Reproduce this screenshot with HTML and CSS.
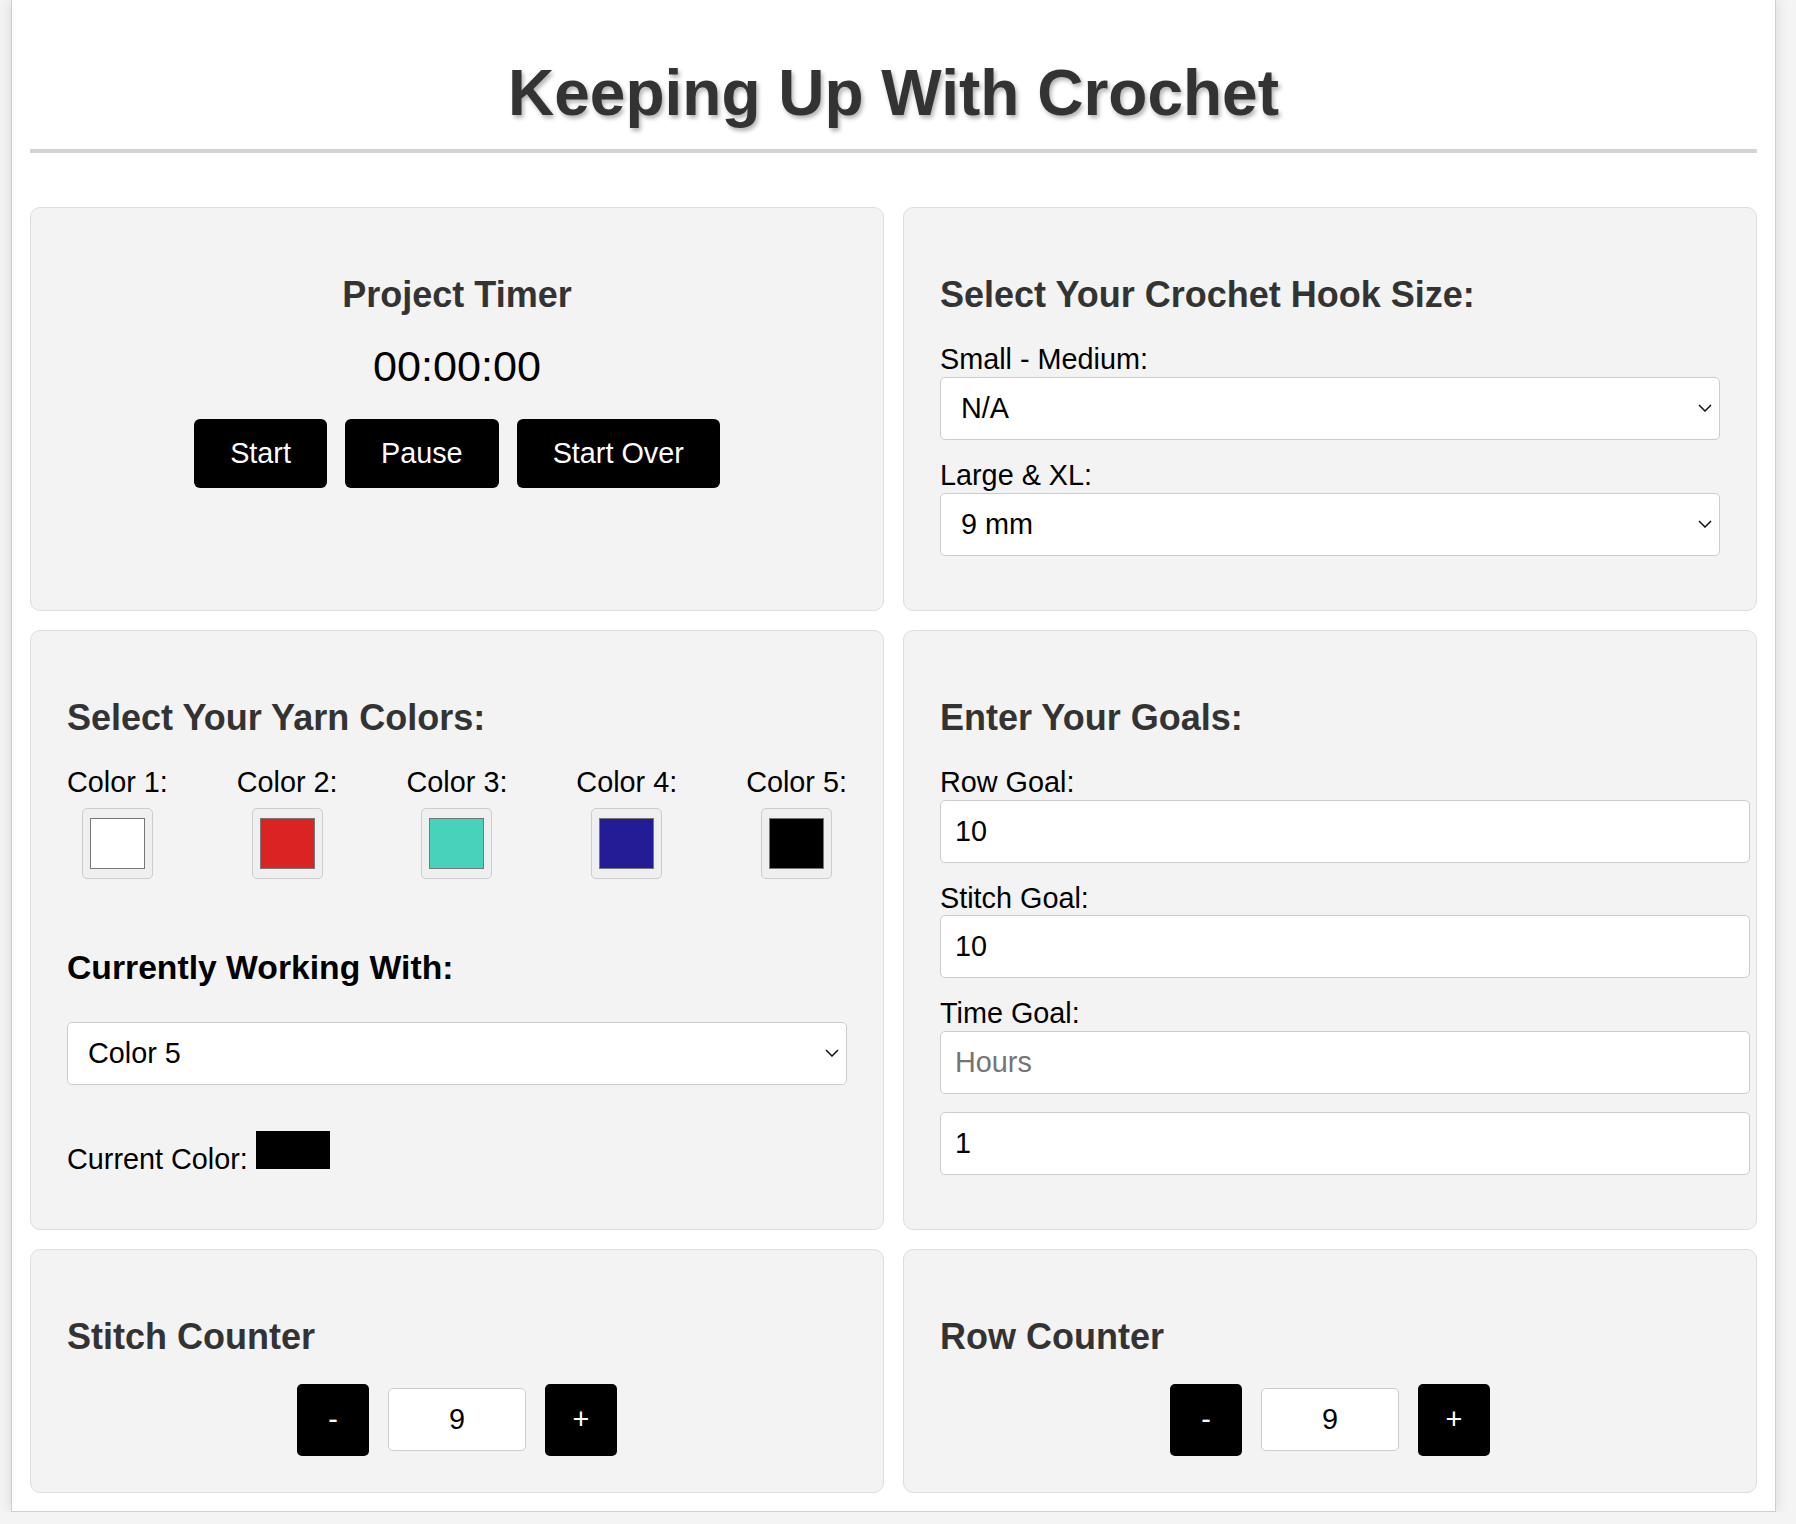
FILE: index.html
```html
<!DOCTYPE html>
<html lang="en">
<head>
<meta charset="utf-8">
<title>Keeping Up With Crochet</title>
<link rel="stylesheet" href="styles.css">
</head>
<body>
<div class="app">
  <h1 class="app-title">Keeping Up With Crochet</h1>
  <div class="grid">
    <section class="card card-center">
      <h2 class="card-title">Project Timer</h2>
      <div class="timer">00:00:00</div>
      <div class="timer-buttons">
        <button class="btn" type="button">Start</button>
        <button class="btn" type="button">Pause</button>
        <button class="btn" type="button">Start Over</button>
      </div>
    </section>

    <section class="card">
      <h2 class="card-title">Select Your Crochet Hook Size:</h2>
      <label class="field-label" for="hook-sm">Small - Medium:</label>
      <div class="select-wrap">
        <select class="field-select" id="hook-sm"><option>N/A</option></select>
        <svg class="select-arrow" width="14" height="8" viewBox="0 0 14 8" aria-hidden="true"><polyline points="1,1 7,7 13,1" fill="none" stroke="#111" stroke-width="1.5"/></svg>
      </div>
      <label class="field-label" for="hook-lg">Large &amp; XL:</label>
      <div class="select-wrap">
        <select class="field-select" id="hook-lg"><option>9 mm</option></select>
        <svg class="select-arrow" width="14" height="8" viewBox="0 0 14 8" aria-hidden="true"><polyline points="1,1 7,7 13,1" fill="none" stroke="#111" stroke-width="1.5"/></svg>
      </div>
    </section>

    <section class="card">
      <h2 class="card-title">Select Your Yarn Colors:</h2>
      <div class="swatches">
        <div class="swatch-item"><label class="field-label" for="c1">Color 1:</label><input class="swatch" id="c1" type="color" value="#ffffff"></div>
        <div class="swatch-item"><label class="field-label" for="c2">Color 2:</label><input class="swatch" id="c2" type="color" value="#dc2323"></div>
        <div class="swatch-item"><label class="field-label" for="c3">Color 3:</label><input class="swatch" id="c3" type="color" value="#48d1bb"></div>
        <div class="swatch-item"><label class="field-label" for="c4">Color 4:</label><input class="swatch" id="c4" type="color" value="#241c96"></div>
        <div class="swatch-item"><label class="field-label" for="c5">Color 5:</label><input class="swatch" id="c5" type="color" value="#000000"></div>
      </div>
      <h3 class="working-title">Currently Working With:</h3>
      <div class="select-wrap">
        <select class="field-select"><option>Color 5</option></select>
        <svg class="select-arrow" width="14" height="8" viewBox="0 0 14 8" aria-hidden="true"><polyline points="1,1 7,7 13,1" fill="none" stroke="#111" stroke-width="1.5"/></svg>
      </div>
      <p class="current-color">Current Color: <span class="current-chip"></span></p>
    </section>

    <section class="card">
      <h2 class="card-title">Enter Your Goals:</h2>
      <label class="field-label" for="row-goal">Row Goal:</label>
      <input class="field-input" id="row-goal" type="number" value="10">
      <label class="field-label" for="stitch-goal">Stitch Goal:</label>
      <input class="field-input" id="stitch-goal" type="number" value="10">
      <label class="field-label" for="time-goal">Time Goal:</label>
      <input class="field-input" id="time-goal" type="number" placeholder="Hours">
      <input class="field-input" type="number" value="1">
    </section>

    <section class="card">
      <h2 class="card-title">Stitch Counter</h2>
      <div class="counter">
        <button class="counter-btn" type="button">-</button>
        <input class="counter-value" type="number" value="9">
        <button class="counter-btn" type="button">+</button>
      </div>
    </section>

    <section class="card">
      <h2 class="card-title">Row Counter</h2>
      <div class="counter">
        <button class="counter-btn" type="button">-</button>
        <input class="counter-value" type="number" value="9">
        <button class="counter-btn" type="button">+</button>
      </div>
    </section>
  </div>
</div>
</body>
</html>
```

FILE: styles.css
```css
* {
  box-sizing: border-box;
}

html, body {
  margin: 0;
  padding: 0;
}

body {
  background: #f4f4f4;
  font-family: "Liberation Sans", Arial, sans-serif;
  color: #000;
}

.app {
  width: 1765px;
  margin-left: 11px;
  padding: 18px;
  background: #fff;
  border: 1px solid #cfcfcf;
  border-top: none;
  box-shadow: 0 0 12px rgba(0, 0, 0, 0.12);
}

.app-title {
  margin: 38px 0 54px;
  padding-bottom: 19px;
  border-bottom: 4px solid #d3d3d3;
  text-align: center;
  font-size: 64px;
  font-weight: bold;
  line-height: normal;
  color: #333;
  text-shadow: 2px 3px 4px rgba(0, 0, 0, 0.3);
}

.grid {
  display: grid;
  grid-template-columns: 1fr 1fr;
  gap: 19px;
}

.card {
  background: #f3f3f3;
  border: 1px solid #dddddd;
  border-radius: 10px;
  padding: 36px;
  min-width: 0;
}

.card-center {
  text-align: center;
}

.card-title {
  margin: 30px 0 26px;
  font-size: 36px;
  font-weight: bold;
  line-height: normal;
  color: #333;
}

.timer {
  font-size: 43.2px;
  line-height: normal;
  color: #000;
}

.timer-buttons {
  display: flex;
  justify-content: center;
  gap: 18px;
  margin-top: 28px;
}

.btn {
  font-family: inherit;
  font-size: 28.8px;
  line-height: normal;
  padding: 18px 36px;
  background: #000;
  color: #fff;
  border: none;
  border-radius: 6px;
}

.field-label {
  display: block;
  font-size: 28.8px;
  line-height: 1.2;
  color: #000;
}

.select-wrap {
  position: relative;
  margin: 0 0 18.5px;
}

.field-select {
  display: block;
  width: 100%;
  height: 63px;
  margin: 0;
  padding: 0 40px 0 20px;
  font-family: inherit;
  font-size: 28.8px;
  color: #000;
  background: #fff;
  border: 1px solid #cccccc;
  border-radius: 5px;
  -webkit-appearance: none;
  appearance: none;
}

.select-arrow {
  position: absolute;
  right: 8px;
  top: 50%;
  transform: translateY(-50%);
  pointer-events: none;
}

.field-input {
  display: block;
  box-sizing: content-box;
  width: 100%;
  height: 33px;
  margin: 0 0 18px;
  padding: 14px;
  font-family: inherit;
  font-size: 28.8px;
  color: #000;
  background: #fff;
  border: 1px solid #cccccc;
  border-radius: 5px;
}

.field-input::placeholder {
  color: #757575;
}

input[type="number"]::-webkit-inner-spin-button,
input[type="number"]::-webkit-outer-spin-button {
  -webkit-appearance: none;
  margin: 0;
}

.swatches {
  display: flex;
  justify-content: space-between;
}

.swatch-item {
  display: flex;
  flex-direction: column;
  align-items: center;
  gap: 8px;
}

.swatch {
  width: 71px;
  height: 71px;
  padding: 0;
  background: #efefef;
  border: 1px solid #cccccc;
  border-radius: 5px;
}

.swatch::-webkit-color-swatch-wrapper {
  padding: 9px 7px;
}

.swatch::-webkit-color-swatch {
  border: 1px solid #777;
  border-radius: 0;
}

.working-title {
  margin: 69px 0 35px;
  font-size: 33.7px;
  font-weight: bold;
  line-height: normal;
  color: #000;
}

.current-color {
  margin: 46px 0 0;
  font-size: 28.8px;
  line-height: normal;
}

.current-chip {
  display: inline-block;
  width: 74px;
  height: 38px;
  background: #000;
}

.counter {
  display: flex;
  justify-content: center;
  align-items: center;
  gap: 19px;
}

.counter-btn {
  width: 72px;
  height: 72px;
  padding: 0;
  font-family: inherit;
  font-size: 28.8px;
  background: #000;
  color: #fff;
  border: none;
  border-radius: 5px;
}

.counter-value {
  width: 138px;
  height: 63px;
  padding: 0 10px;
  font-family: inherit;
  font-size: 28.8px;
  text-align: center;
  color: #000;
  background: #fff;
  border: 1px solid #cccccc;
  border-radius: 5px;
}
```
